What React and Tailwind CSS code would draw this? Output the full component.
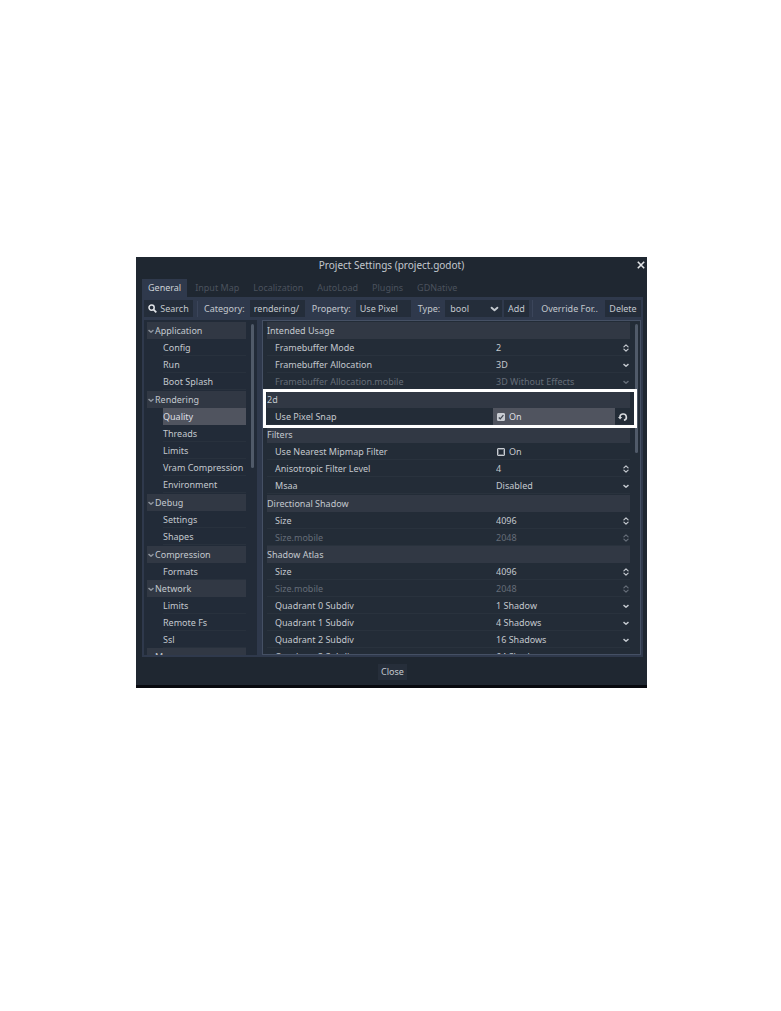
import React, { useState } from "react";

const categories = [
  { name: "Application", items: ["Config", "Run", "Boot Splash"] },
  { name: "Rendering", items: ["Quality", "Threads", "Limits", "Vram Compression", "Environment"] },
  { name: "Debug", items: ["Settings", "Shapes"] },
  { name: "Compression", items: ["Formats"] },
  { name: "Network", items: ["Limits", "Remote Fs", "Ssl"] },
  { name: "Memory", items: [] },
];

const sections = [
  {
    name: "Intended Usage",
    rows: [
      { label: "Framebuffer Mode", kind: "spin", value: "2" },
      { label: "Framebuffer Allocation", kind: "select", value: "3D" },
      { label: "Framebuffer Allocation.mobile", kind: "select", value: "3D Without Effects", off: true },
    ],
  },
  { name: "2d", rows: [{ label: "Use Pixel Snap", kind: "check", checked: true, changed: true }], outlined: true },
  {
    name: "Filters",
    rows: [
      { label: "Use Nearest Mipmap Filter", kind: "check", checked: false },
      { label: "Anisotropic Filter Level", kind: "spin", value: "4" },
      { label: "Msaa", kind: "select", value: "Disabled" },
    ],
  },
  {
    name: "Directional Shadow",
    rows: [
      { label: "Size", kind: "spin", value: "4096" },
      { label: "Size.mobile", kind: "spin", value: "2048", off: true },
    ],
  },
  {
    name: "Shadow Atlas",
    rows: [
      { label: "Size", kind: "spin", value: "4096" },
      { label: "Size.mobile", kind: "spin", value: "2048", off: true },
      { label: "Quadrant 0 Subdiv", kind: "select", value: "1 Shadow" },
      { label: "Quadrant 1 Subdiv", kind: "select", value: "4 Shadows" },
      { label: "Quadrant 2 Subdiv", kind: "select", value: "16 Shadows" },
      { label: "Quadrant 3 Subdiv", kind: "select", value: "64 Shadows" },
    ],
  },
];

function Chevron({ className }) {
  return (
    <svg viewBox="0 0 8 8" className={className} fill="none" stroke="currentColor" strokeWidth="1.4" strokeLinecap="round" strokeLinejoin="round" aria-hidden="true">
      <path d="M1.9 3.4 4 5.2 6.1 3.4" />
    </svg>
  );
}

function UpDown({ className }) {
  return (
    <svg viewBox="0 0 8 10" className={className} fill="none" stroke="currentColor" strokeWidth="1.2" strokeLinecap="round" strokeLinejoin="round" aria-hidden="true">
      <path d="M1.9 3.9 4 1.8 6.1 3.9M1.9 6.1 4 8.2 6.1 6.1" />
    </svg>
  );
}

function Row({ row, id }) {
  const [on, setOn] = useState(!!row.checked);
  const tone = row.off ? "text-[#656d78]" : "text-[#c3c8ce]";
  return (
    <div className={`flex h-[17px] items-center shadow-[inset_0_-1px_#29323d] ${tone}`}>
      <label htmlFor={id} className="w-[62%] truncate pl-2">{row.label}</label>
      {row.kind === "check" && (
        <div className="flex h-[17px] min-w-0 flex-1 pl-px">
          <label className={`flex flex-1 items-center gap-1 pl-1 ${row.changed ? "bg-[#50545f] text-[#dddfe3]" : ""}`}>
            <span className="relative flex size-2">
              <input
                id={id}
                type="checkbox"
                checked={on}
                onChange={() => setOn(!on)}
                className="size-2 appearance-none rounded-[1px] border border-[#c8ccd2] outline outline-[#c8ccd2]/40 -outline-offset-2 checked:bg-[#c8ccd2]"
              />
              {on && (
                <svg viewBox="0 0 8 8" className="pointer-events-none absolute inset-0" fill="none" stroke="#414754" strokeWidth="1.3" aria-hidden="true">
                  <path d="M1.8 4.4 3.3 5.8 6.4 2.2" />
                </svg>
              )}
            </span>
            On
          </label>
          {row.changed && (
            <button type="button" aria-label="Revert" className="flex w-[15px] items-center justify-center">
              <svg viewBox="0 0 10 10" className="size-[10px]" fill="none" stroke="#d5d8dc" strokeWidth="1.6" aria-hidden="true">
                <path d="M2 5.6A3.2 3.2 0 1 1 5.9 8.3" />
                <path d="M0 4.9h4.2L2.1 7.6z" fill="#d5d8dc" stroke="none" />
              </svg>
            </button>
          )}
        </div>
      )}
      {row.kind === "select" && (
        <div className="relative flex min-w-0 flex-1 items-center">
          <select id={id} disabled={row.off} className="h-4 w-full appearance-none bg-transparent pl-1 opacity-100 outline-none">
            <option>{row.value}</option>
          </select>
          <Chevron className="pointer-events-none absolute right-0 size-2" />
        </div>
      )}
      {row.kind === "spin" && (
        <div className="flex min-w-0 flex-1 items-center">
          <input id={id} defaultValue={row.value} disabled={row.off} className="h-4 min-w-0 flex-1 bg-transparent pl-1 outline-none" />
          <UpDown className="h-[10px] w-2 shrink-0" />
        </div>
      )}
    </div>
  );
}

export default function App() {
  const [selected, setSelected] = useState("Rendering/Quality");
  return (
    <main className="min-h-screen bg-white pt-[257px] pr-[134px] pl-[136px] font-['Noto_Sans',sans-serif] text-[9px] leading-4 text-[#c3c8ce]">
      <section role="dialog" aria-label="Project Settings" className="bg-[#1f2731]">
        <header className="grid h-4 grid-cols-[20px_1fr_20px] items-center">
          <h1 className="col-start-2 text-center text-[10px]">Project Settings (project.godot)</h1>
          <button type="button" aria-label="Close window" className="flex justify-center pl-[7px]">
            <svg viewBox="0 0 8 8" className="size-2" stroke="#e3e5e8" strokeWidth="1.6" aria-hidden="true">
              <path d="m.8.8 6.4 6.4M7.2.8.8 7.2" />
            </svg>
          </button>
        </header>

        <nav className="mt-[6px] flex h-[18px] items-center gap-[2px] px-[6px] text-[#4b525d]">
          <button type="button" className="h-[18px] bg-[#2f394c] px-[6px] pb-px text-[#cdd1d6]">General</button>
          <button type="button" className="px-[6px] pb-px">Input Map</button>
          <button type="button" className="px-[6px] pb-px">Localization</button>
          <button type="button" className="px-[6px] pb-px">AutoLoad</button>
          <button type="button" className="px-[6px] pb-px">Plugins</button>
          <button type="button" className="px-[6px] pb-px">GDNative</button>
        </nav>

        <div className="mr-1 ml-[6px] bg-[#2f394c] px-[2px] pb-[2px]">
          <div className="flex h-[23px] items-center">
            <button type="button" className="flex h-[17px] w-[49px] items-center justify-center gap-[3px] bg-[#242d3a]">
              <svg viewBox="0 0 10 10" className="size-[9px]" fill="none" stroke="#dfe2e6" strokeWidth="1.7" aria-hidden="true">
                <circle cx="4" cy="4" r="2.9" />
                <path d="m6.2 6.2 3 3" strokeWidth="2" />
              </svg>
              Search
            </button>
            <label htmlFor="category" className="ml-1 border-l border-[#3b455a] pr-[5px] pl-[6px]">Category:</label>
            <input id="category" defaultValue="rendering/" className="h-[17px] w-[55px] min-w-0 bg-[#242d3a] px-1 outline-none" />
            <label htmlFor="property" className="pr-[5px] pl-[7px]">Property:</label>
            <input id="property" defaultValue="Use Pixel" className="h-[17px] w-[55px] min-w-0 bg-[#242d3a] px-1 outline-none" />
            <label htmlFor="type" className="pr-[5px] pl-[7px]">Type:</label>
            <span className="relative flex flex-1 items-center">
              <select id="type" className="h-[17px] w-full appearance-none bg-[#242d3a] px-[5px] outline-none">
                <option>bool</option>
              </select>
              <Chevron className="pointer-events-none absolute right-[2px] size-[11px]" />
            </span>
            <button type="button" className="ml-[2px] h-[17px] w-[25px] bg-[#242d3a]">Add</button>
            <button type="button" className="ml-[3px] h-[17px] w-[70px] border-l border-[#3b455a] pl-1">Override For..</button>
            <button type="button" className="ml-[3px] h-[17px] w-[36px] bg-[#242d3a]">Delete</button>
          </div>

          <div className="flex gap-[5px]">
            <div className="h-[335px] w-[113px] shrink-0 overflow-hidden bg-[#222b38] pt-[2px] pl-[3px]">
              <div className="flex justify-between">
                <ul className="w-[99px]">
                  {categories.map((c) => (
                    <li key={c.name} className="[&:nth-child(n+2):nth-child(-n+4)]:mt-px">
                      <button type="button" className="flex h-[17px] w-full items-center bg-[#313844]">
                        <Chevron className="size-2 text-[#8d939c]" />
                        {c.name}
                      </button>
                      <ul>
                        {c.items.map((i) => (
                          <li key={i} className="pl-4">
                            <button
                              type="button"
                              onClick={() => setSelected(`${c.name}/${i}`)}
                              className={`block h-[17px] w-full text-left leading-[17px] whitespace-nowrap ${
                                selected === `${c.name}/${i}` ? "bg-[#50545f] text-[#dddfe3]" : "shadow-[inset_0_-1px_#28313d]"
                              }`}
                            >
                              {i}
                            </button>
                          </li>
                        ))}
                      </ul>
                    </li>
                  ))}
                </ul>
                <div className="mt-[2px] mr-[3px] h-[144px] w-[3px] rounded-full bg-[#505a69]" />
              </div>
            </div>

            <div className="h-[335px] min-w-0 flex-1 border border-[#455064] bg-[#232c37]">
              <div className="h-[333px] overflow-hidden pt-px">
                <div className="flex justify-between gap-[5px] pl-1">
                  <div className="min-w-0 flex-1">
                    {sections.map((s, si) => (
                      <section key={s.name} className="relative [&:nth-child(n+2):nth-child(-n+4)]:mt-px">
                        <h2 className="h-[17px] bg-[#313844] leading-[17px]">{s.name}</h2>
                        {s.rows.map((r, ri) => (
                          <Row key={r.label} row={r} id={`prop-${si}-${ri}`} />
                        ))}
                        {s.outlined && (
                          <div className="pointer-events-none absolute -top-[2px] -right-[7px] -bottom-[3px] -left-1 z-10 border-[3px] border-white" />
                        )}
                      </section>
                    ))}
                  </div>
                  <div className="mt-[2px] mr-[2px] h-[129px] w-[3px] shrink-0 rounded-full bg-[#505a69]" />
                </div>
              </div>
            </div>
          </div>
        </div>

        <footer className="flex h-[28px] items-center justify-center pt-[2px] pl-[2px]">
          <button type="button" className="h-4 bg-[#262e3a] px-[3px]">Close</button>
        </footer>
        <div className="h-[3px] bg-[#07090e]" />
      </section>
    </main>
  );
}
